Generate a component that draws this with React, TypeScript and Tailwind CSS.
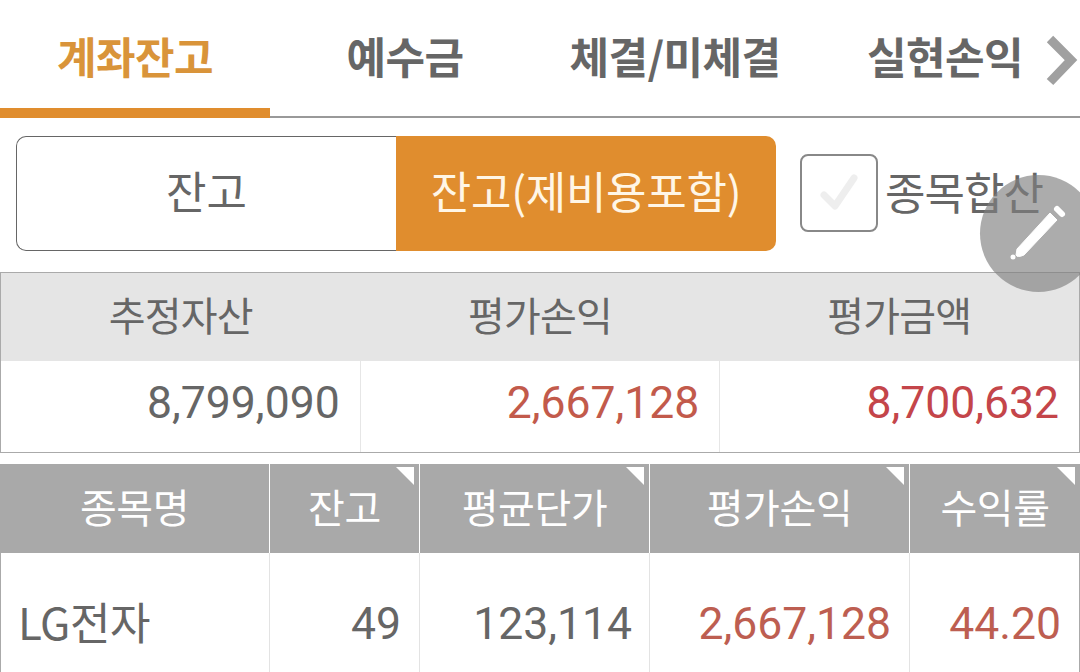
const font = { fontFamily: '"Noto Sans CJK KR", Roboto, sans-serif' };

const tabs = ["계좌잔고", "예수금", "체결/미체결", "실현손익"];

const columns = [
  { label: "종목명", width: "w-[270px]", corner: false },
  { label: "잔고", width: "w-[150px]", corner: true },
  { label: "평균단가", width: "w-[230px]", corner: true },
  { label: "평가손익", width: "w-[260px]", corner: true },
  { label: "수익률", width: "flex-1", corner: true },
];

function Corner() {
  return (
    <svg className="absolute right-[5px] top-[3px]" width="18" height="18" viewBox="0 0 18 18">
      <path d="M0 0H18V18Z" fill="#fff" />
    </svg>
  );
}

export default function App() {
  return (
    <div className="relative h-[672px] w-[1080px] overflow-hidden bg-white text-[#666]" style={font}>
      {/* tabs */}
      <div className="relative flex h-[118px] border-b-2 border-[#999]">
        {tabs.map((t, i) => (
          <div
            key={t}
            className={`-mb-[2px] flex w-[270px] items-center justify-center text-[43px] font-bold tracking-[-0.6px] ${
              i === 0 ? "border-b-[10px] border-[#e08d2e] pt-[2px] text-[#d9943a]" : "pb-[8px] text-[#666]"
            }`}
          >
            {t}
          </div>
        ))}
        <svg className="absolute left-[1044px] top-[34px]" width="34" height="54" viewBox="0 0 34 54">
          <path d="M6 5L27 26L6 48" fill="none" stroke="#a0a0a0" strokeWidth="9" />
        </svg>
      </div>

      {/* toggle + checkbox */}
      <div className="flex h-[154px] items-start pl-[16px] pt-[18px]">
        <div className="flex h-[115px] w-[760px]">
          <div className="flex w-[380px] items-center justify-center rounded-l-[10px] border border-r-0 border-[#666] text-[44px]">
            <span className="-mt-[8px]">잔고</span>
          </div>
          <div className="flex w-[380px] items-center justify-center rounded-r-[10px] bg-[#e08d2e] text-[44px] tracking-[-0.3px] text-[#fff6e6]">
            <span className="-mt-[8px]">잔고(제비용포함)</span>
          </div>
        </div>
        <div className="ml-[24px] mt-[18px] flex items-center">
          <div className="flex h-[78px] w-[78px] items-center justify-center rounded-[8px] border-2 border-[#888]">
            <svg width="42" height="42" viewBox="0 0 42 42">
              <path d="M6 23L17 34L36 6" fill="none" stroke="#eeeeee" strokeWidth="7" strokeLinecap="round" strokeLinejoin="round" />
            </svg>
          </div>
          <span className="ml-[7px] -mt-[4px] whitespace-nowrap text-[44px] leading-none tracking-[-1px]">종목합산</span>
        </div>
      </div>

      {/* summary */}
      <div className="mb-[11px] h-[181px] border border-[#aaa]">
        <div className="flex h-[88px] bg-[#e5e5e5] text-[40px]">
          {["추정자산", "평가손익", "평가금액"].map((t) => (
            <div key={t} className="flex flex-1 items-center justify-center pb-[6px] tracking-[-0.8px]">
              {t}
            </div>
          ))}
        </div>
        <div className="flex h-[91px] font-['Roboto'] text-[44.5px] font-normal">
          <div className="flex flex-1 items-center justify-end border-r border-[#e6e6e6] pr-[20px]">
            <span className="-mt-[6px]">8,799,090</span>
          </div>
          <div className="flex flex-1 items-center justify-end border-r border-[#e6e6e6] pr-[20px] text-[#c25a4b]">
            <span className="-mt-[6px]">2,667,128</span>
          </div>
          <div className="flex flex-1 items-center justify-end pr-[20px] text-[#c4454a]">
            <span className="-mt-[6px]">8,700,632</span>
          </div>
        </div>
      </div>

      {/* holdings */}
      <div className="flex h-[89px] bg-[#a9a9a9] text-[40px] text-white">
        {columns.map((c, i) => (
          <div
            key={c.label}
            className={`relative flex items-center justify-center pb-[6px] tracking-[-0.4px] ${c.width} ${i < 4 ? "border-r border-white" : ""}`}
          >
            {c.label}
            {c.corner && <Corner />}
          </div>
        ))}
      </div>
      <div className="flex h-[119px] border-l border-r border-[#aaa] font-['Roboto'] text-[44.5px] font-normal">
        <div className="flex w-[269px] items-center border-r border-[#e3e3e3] pl-[17px] pt-[16px] text-[44px] tracking-[-0.5px]" style={font}>
          LG전자
        </div>
        <div className="flex w-[150px] items-center justify-end border-r border-[#e3e3e3] pr-[18px] pt-[24px]">49</div>
        <div className="flex w-[230px] items-center justify-end border-r border-[#e3e3e3] pr-[17px] pt-[24px]">123,114</div>
        <div className="flex w-[260px] items-center justify-end border-r border-[#e3e3e3] pr-[18px] pt-[24px] text-[#bd5e51]">2,667,128</div>
        <div className="flex flex-1 items-center justify-end pr-[18px] pt-[24px] text-[#bd5e51]">44.20</div>
      </div>

      {/* floating edit button */}
      <div className="absolute left-[980px] top-[175px] h-[117px] w-[117px] rounded-full bg-[#808080]/65">
        <svg width="117" height="117" viewBox="0 0 117 117">
          <circle cx="33" cy="82" r="2.5" fill="#fff" />
          <path d="M37 74L70 38L77 45L44 80Q37 83 36 80Z" fill="#fff" stroke="#fff" strokeWidth="1" strokeLinejoin="round" />
          <path d="M77 34L82 39" fill="none" stroke="#fff" strokeWidth="6" strokeLinecap="round" />
        </svg>
      </div>
    </div>
  );
}
